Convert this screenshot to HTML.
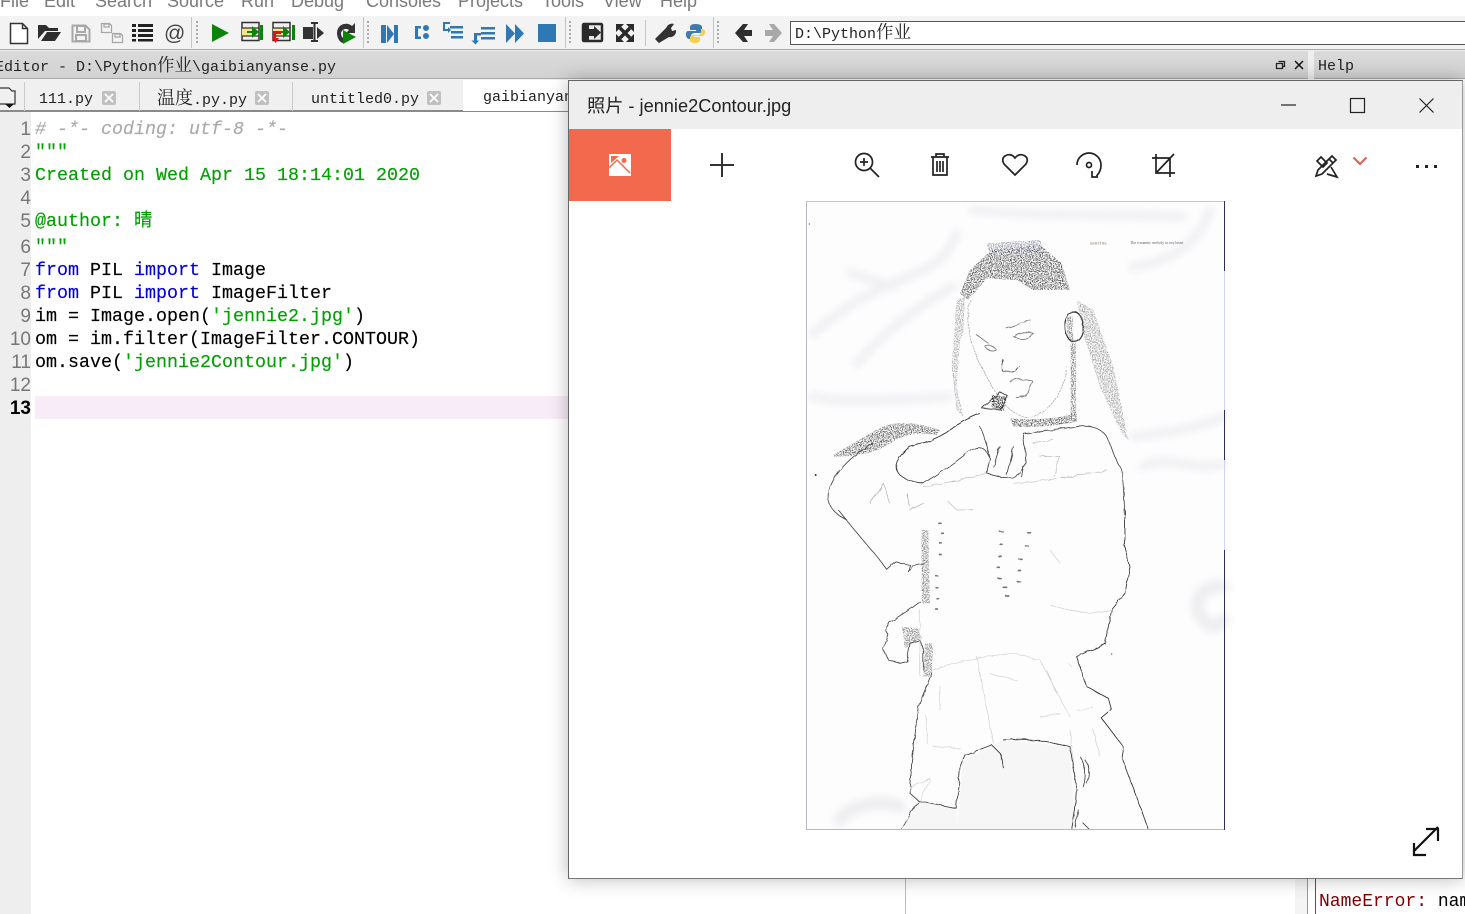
<!DOCTYPE html>
<html><head><meta charset="utf-8"><style>
html,body{margin:0;padding:0;width:1465px;height:914px;overflow:hidden;background:#fff}
.a{position:absolute;white-space:pre}
.m{font-family:"Liberation Sans",sans-serif;font-size:18px;color:#7a7a7a;top:-9px}
.t{font-family:"Liberation Mono","Noto Serif CJK SC",monospace;font-size:15px;color:#222;line-height:18px}
.t b{font-weight:normal;font-size:17.500px;font-family:"Noto Serif CJK SC",serif;line-height:18px}
.c{font-family:"Liberation Mono","Noto Sans CJK SC",monospace;font-size:18.330px;line-height:23px;left:35px;color:#000;-webkit-text-stroke:.15px}
.n{font-family:"Liberation Sans",sans-serif;font-size:19px;line-height:23px;color:#777;width:31px;left:0;text-align:right}
.k{color:#0000d8}.s{color:#00a000}
.x{width:14px;height:14px;background:#c0c0c0;top:91px;border-radius:2px}
</style></head><body>
<span class="a m" style="left:0">File</span><span class="a m" style="left:44px">Edit</span><span class="a m" style="left:95px">Search</span><span class="a m" style="left:167px">Source</span><span class="a m" style="left:241px">Run</span><span class="a m" style="left:291px">Debug</span><span class="a m" style="left:366px">Consoles</span><span class="a m" style="left:458px">Projects</span><span class="a m" style="left:542px">Tools</span><span class="a m" style="left:603px">View</span><span class="a m" style="left:660px">Help</span>

<div class="a" style="left:0;top:16px;width:1465px;height:33px;background:#f3f3f3;border-bottom:1px solid #a8a8a8"></div>
<div class="a" style="left:0;top:50px;width:1465px;height:1px;background:#eee"></div>
<div class="a" style="left:0;top:51px;width:1308px;height:27px;background:linear-gradient(#dadada,#d2d2d2);border-bottom:1px solid #aaa"></div>
<div class="a" style="left:1308px;top:51px;width:6px;height:28px;background:#eee"></div>
<div class="a" style="left:1314px;top:51px;width:151px;height:27px;background:linear-gradient(#dadada,#d2d2d2);border-bottom:1px solid #aaa"></div>
<div class="a" style="left:0;top:79px;width:568px;height:33px;background:#f0f0f0;border-bottom:2px solid #8a8a8a;box-sizing:border-box"></div>
<div class="a" style="left:463px;top:80px;width:105px;height:31px;background:#fff"></div>
<div class="a" style="left:24px;top:82px;width:1px;height:29px;background:#ccc"></div>
<div class="a" style="left:139px;top:82px;width:1px;height:29px;background:#ccc"></div>
<div class="a" style="left:292px;top:82px;width:1px;height:29px;background:#ccc"></div>
<div class="a" style="left:0;top:112px;width:31px;height:802px;background:#eeeeee"></div>
<div class="a" style="left:35px;top:396px;width:533px;height:23px;background:#f7ecf7"></div>
<div class="a" style="left:790px;top:21px;width:675px;height:22px;background:#fff;border:1px solid #555;border-right:0"></div>

<span class="a t" style="left:795px;top:23px">D:\Python<b>作业</b></span>
<span class="a t" style="left:-5px;top:56px">Editor - D:\Python<b>作业</b>\gaibianyanse.py</span>
<span class="a t" style="left:1318px;top:58px">Help</span>
<span class="a t" style="left:39px;top:91px">111.py</span>
<span class="a t" style="left:157px;top:88px"><b style="font-size:18px">温度</b>.py.py</span>
<span class="a t" style="left:311px;top:91px">untitled0.py</span>
<span class="a t" style="left:483px;top:89px">gaibianyanse.py</span>
<div class="a x" style="left:102px"></div><div class="a x" style="left:255px"></div><div class="a x" style="left:427px"></div>

<span class="a n" style="top:118px">1</span><span class="a n" style="top:141px">2</span><span class="a n" style="top:164px">3</span><span class="a n" style="top:187px">4</span><span class="a n" style="top:210px">5</span><span class="a n" style="top:236px">6</span><span class="a n" style="top:259px">7</span><span class="a n" style="top:282px">8</span><span class="a n" style="top:305px">9</span><span class="a n" style="top:328px">10</span><span class="a n" style="top:351px">11</span><span class="a n" style="top:374px">12</span><span class="a n" style="top:397px;color:#000;font-weight:bold">13</span>

<span class="a c" style="top:118px;color:#aaa;font-style:italic"># -*- coding: utf-8 -*-</span>
<span class="a c s" style="top:141px">"""</span>
<span class="a c s" style="top:164px">Created on Wed Apr 15 18:14:01 2020</span>
<span class="a c s" style="top:210px">@author: 晴</span>
<span class="a c s" style="top:236px">"""</span>
<span class="a c" style="top:259px"><span class="k">from</span> PIL <span class="k">import</span> Image</span>
<span class="a c" style="top:282px"><span class="k">from</span> PIL <span class="k">import</span> ImageFilter</span>
<span class="a c" style="top:305px">im = Image.open(<span class="s">'jennie2.jpg'</span>)</span>
<span class="a c" style="top:328px">om = im.filter(ImageFilter.CONTOUR)</span>
<span class="a c" style="top:351px">om.save(<span class="s">'jennie2Contour.jpg'</span>)</span>

<div class="a" style="left:905px;top:870px;width:1px;height:44px;background:#bbb"></div>
<div class="a" style="left:1295px;top:870px;width:12px;height:44px;background:#f4f4f4"></div>
<div class="a" style="left:1307px;top:870px;width:1px;height:44px;background:#999"></div>
<div class="a" style="left:1315px;top:870px;width:1px;height:44px;background:#555"></div>
<span class="a" style="left:1319px;top:892px;font:18px/21px 'Liberation Mono',monospace;color:#7f0000">NameError: <span style="color:#000">name</span></span>

<svg class="a" style="left:0;top:0" width="1465" height="114" viewBox="0 0 1465 114">
<path d="M10.500 23.500h12l5 5v15h-17z M22.500 23.500v5h5" fill="#fff" stroke="#333" stroke-width="1.500"/>
<path d="M38 39V25h8l3 3h9v3H45l-7 8zM41 41l6-9h14l-6 9z" fill="#2e2e2e"/>
<path d="M72.500 25.500h13l4 4v12h-17zM77 26h8v6h-8zM76 35h10v6H76z" fill="none" stroke="#a8a8a8" stroke-width="2"/>
<path d="M101.500 23.500h8l2 2v7h-10zM104 24h5v3h-5zM112.500 33.500h8l2 2v7h-10zM115 34h5v3h-5z" fill="none" stroke="#a8a8a8" stroke-width="1.300"/>
<path d="M132 24h4v3h-4zM138 24h15v3h-15zM132 29h4v3h-4zM138 29h15v3h-15zM132 34h4v3h-4zM138 34h15v3h-15zM132 39h4v2.500h-4zM138 39h15v2.500h-15z" fill="#222"/>
<text x="164" y="40" font-family="Liberation Sans" font-size="21" fill="#444">@</text>
<path d="M191.500 17v31M363.500 17v31M565.500 17v31M645.500 20v26M713.500 17v31" stroke="#c4c4c4"/>
<path d="M197 21v24M368 21v24M570 21v24M718 21v24" stroke="#aaa" stroke-dasharray="2 2" stroke-width="2"/>
<path d="M212 24l17 9-17 9z" fill="#0a850a"/>
<rect x="242" y="22.500" width="17" height="18" fill="#f0f0f0" stroke="#333" stroke-width="1.500"/><rect x="242" y="28" width="11" height="8" fill="#f4e58a"/><path d="M242 28h17M242 36h17" stroke="#333" stroke-width="1.300"/><path d="M252 26l7 6-7 6zM247 31h6v2h-6zM260 25h3v15h-3z" fill="#0a850a"/>
<rect x="273" y="22.500" width="17" height="18" fill="#f0f0f0" stroke="#333" stroke-width="1.500"/><rect x="273" y="28" width="11" height="8" fill="#f4e58a"/><path d="M273 28h17M273 36h17" stroke="#333" stroke-width="1.300"/><path d="M283 26l7 6-7 6zM278 31h6v2h-6zM292 25h3v15h-3z" fill="#0a850a"/><path d="M273 31h8v3h-5v5h-3zM272 38h7l-3.500 5z" fill="#e81010"/>
<path d="M303 27h10v12h-10zM317 27l7 6-7 6zM311 22h7v2h-2.500v16h2.500v2h-7v-2h2.500V24h-2.500z" fill="#333"/>
<path d="M337 33a9 9 0 0 1 15-7l3-3v10h-9l3-3a5 5 0 0 0-8 3c0 3 1 4 2 5v5c-4-1-6-6-6-10z" fill="#333"/><path d="M343 30l13 7-13 7z" fill="#0a850a"/>
<path d="M381 25h5v18h-5zM387 25l7 9-7 9zM394 25h4v18h-4z" fill="#2f78b4"/>
<path d="M415 26h6v2.500h-3v8h3v2.500h-6zM426 25a3 3 0 1 1 0 6 3 3 0 0 1 0-6zM426 33a3 3 0 1 1 0 6 3 3 0 0 1 0-6z" fill="#2f78b4"/>
<path d="M443 22h7v2h-5v5h3v-2l3 3-3 3v-2h-5zM450 26h13v2.500h-13zM451 31h12v2.500h-12zM451 36h12v2.500h-12z" fill="#2f78b4"/>
<path d="M474 33h7v2.500h-4v5h2l-3.500 4-4-4h2.500zM481 27h14v2.500h-14zM481 32h14v2.500h-14zM481 37h14v2.500h-14z" fill="#2f78b4"/>
<path d="M506 24l9 9.500-9 9.500zM515 24l9 9.500-9 9.500z" fill="#2f78b4"/>
<rect x="538" y="24" width="18" height="18" fill="#2f78b4"/>
<rect x="583" y="24" width="19" height="17" rx="1" fill="#e8e8e8" stroke="#2a2a2a" stroke-width="2.500"/><path d="M583 24h6v17h-6zM589 29h5v-3l7 6.500-7 6.500v-3h-5z" fill="#2a2a2a"/>
<path d="M620 28l10 10M630 28l-10 10" stroke="#2a2a2a" stroke-width="3.500"/><path d="M616 24h8l-8 8zM634 24h-8l8 8zM616 42h8l-8-8zM634 42h-8l8-8z" fill="#2a2a2a"/>
<path d="M656 40l10-10a6 6 0 0 1 8-6l-3 4 1 3 4-1a6 6 0 0 1-7 7l-10 6z" fill="#333"/><path d="M655 39l4 4 12-12-4-4z" fill="#333"/>
<path d="M695 24c-4 0-5 2-5 3v3h6v1h-8c-2 0-2 3-2 4s1 4 3 4h2v-3c0-2 2-3 4-3h4c2 0 3-1 3-3v-3c0-2-3-3-7-3z" fill="#3f7bad"/><path d="M695 43c4 0 5-2 5-3v-3h-6v-1h8c2 0 3-2 3-4s-1-3-3-3h-1v3c0 2-2 3-4 3h-4c-2 0-3 1-3 3v2c0 2 2 3 5 3z" fill="#f5cf4a"/>
<path d="M735 33l8-9h5l-4 6h8v6h-8l4 6h-5z" fill="#2e2e2e"/>
<path d="M782 33l-8-9h-5l4 6h-8v6h8l-4 6h5z" fill="#a8a8a8"/>
<path d="M1276.500 63.500h6v5h-6zM1278.500 61.500h6v5h-2" fill="none" stroke="#222" stroke-width="1.300"/>
<path d="M1295 61l8 8M1303 61l-8 8" stroke="#111" stroke-width="1.500"/>
<path d="M0 88h9l3 3h3v13H0" fill="none" stroke="#333" stroke-width="1.200"/><path d="M5 104h9l-4.500 4z" fill="#111"/>
<path d="M105 94l8 8M113 94l-8 8M258 94l8 8M266 94l-8 8M430 94l8 8M438 94l-8 8" stroke="#fff" stroke-width="1.800"/>
</svg>

<div class="a" style="left:568px;top:80px;width:895px;height:799px;background:#fff;border:1px solid #666;border-right-color:#999;border-bottom-color:#777;box-sizing:border-box;box-shadow:0 0 18px rgba(0,0,0,.28)"></div>
<div class="a" style="left:569px;top:81px;width:893px;height:48px;background:#eeeeee"></div>
<div class="a" style="left:569px;top:129px;width:102px;height:72px;background:#f2694e"></div>
<span class="a" style="left:587px;top:95px;font:18.200px/22px 'Liberation Sans','Noto Sans CJK SC',sans-serif;color:#222">照片 - jennie2Contour.jpg</span>

<svg class="a" style="left:0;top:0" width="1465" height="914" viewBox="0 0 1465 914">
<defs>
<filter id="b" filterUnits="userSpaceOnUse" x="-50" y="-50" width="1400" height="1100"><feGaussianBlur stdDeviation="11"/></filter>
<filter id="gr" filterUnits="userSpaceOnUse" x="0" y="0" width="1290" height="1000"><feTurbulence type="fractalNoise" baseFrequency=".3" numOctaves="2" seed="4"/><feColorMatrix values="0 0 0 0 0 0 0 0 0 0 0 0 0 0 0 6 0 0 0 -2.700"/><feComposite in="SourceGraphic" operator="in"/></filter>
<filter id="wb" filterUnits="userSpaceOnUse" x="0" y="0" width="1290" height="1000"><feTurbulence type="fractalNoise" baseFrequency=".035" numOctaves="2" seed="7"/><feDisplacementMap in="SourceGraphic" scale="10"/></filter>
</defs>
<path d="M1281 105h15" stroke="#222" stroke-width="1.200"/>
<rect x="1350.500" y="98.500" width="14" height="14" fill="none" stroke="#222" stroke-width="1.200"/>
<path d="M1419.500 98.500l14 14M1433.500 98.500l-14 14" stroke="#222" stroke-width="1.200"/>
<path d="M609 154h22v22h-22z" fill="#fff"/><path d="M609 168l8-8 13 13" fill="none" stroke="#f2694e" stroke-width="1.500"/><circle cx="624" cy="160.500" r="2.500" fill="#f2694e"/><path d="M611 156h8l-8 7z" fill="#f2694e"/>
<path d="M710 165h24M722 153v24" stroke="#333" stroke-width="2"/>
<g fill="none" stroke="#222" stroke-width="1.700"><circle cx="864" cy="162" r="8.500"/><path d="M870 168l9 9M860 162h8M864 158v8"/>
<path d="M931 157h18M936 157v-3h8v3M933 157v18h14v-18M937 161v11M940 161v11M943 161v11"/>
<path d="M1015 175l-10-10c-3-3-3-7 0-9 3-2 7-2 10 2 3-4 7-4 10-2 3 2 3 6 0 9z"/>
<path d="M1077 165a12 12 0 0 1 24 0c0 4-1.500 8-4.500 11"/><circle cx="1089" cy="165" r="2.500"/><path d="M1092 171v6h6"/>
<path d="M1152 158h18v19M1156 154v19h19M1156 173l18-19"/>
<path d="M1316 176l2-6 14-14 4 4-14 14zM1329 159l4 4"/><path d="M1321 157l-4 4 6 6 4-4zM1331 167l6 10-10-3"/>
<path d="M1353.500 157.500l6.500 6.500 6.500-6.500" stroke="#d9695a" stroke-width="2.200"/>
<path d="M1414 851l24-24" stroke="#111" stroke-width="2.200"/><path d="M1426 829h12v12M1414 843v12h12" stroke="#111" stroke-width="2.200"/></g>
<path d="M1416 165h3v3h-3zM1425 165h3v3h-3zM1434 165h3v3h-3z" fill="#222"/>

<rect x="806.500" y="201.500" width="418" height="628" fill="#fdfdfe"/>
<g transform="translate(800,200) scale(.3333)" fill="none" stroke-linejoin="round" stroke-linecap="round">
<g filter="url(#b)" stroke="#eeeef1" stroke-width="26" opacity=".9">
<path d="M40 400C120 330 200 280 300 240S430 190 470 100"/><path d="M170 490C250 400 350 320 460 260"/><path d="M40 590C120 610 300 600 450 590"/><path d="M1000 710C1100 700 1200 680 1270 650"/><path d="M1030 800C1100 760 1200 820 1270 790"/><path d="M1000 200C1100 190 1200 130 1230 30"/><path d="M150 220L280 260M520 30C700 50 900 40 1150 50"/></g>
<g filter="url(#gr)">
<path d="M575 150L720 135 785 190 810 270 700 270 650 240 560 235 505 300 480 280 510 210z" fill="#333" opacity=".8"/>
<path d="M100 765Q160 730 230 690T420 690L410 705Q330 690 270 730T100 770z" fill="#333" opacity=".75"/>
<path d="M630 655Q730 665 830 640L830 665Q730 685 640 680z" fill="#333" opacity=".8"/>
<path d="M830 300L880 330 940 500 985 720 965 700 900 560 850 400z" fill="#555" opacity=".5"/>
<path d="M470 300L495 290 490 400 480 420 470 560 490 650 470 630 455 500z" fill="#777" opacity=".6"/>
<path d="M575 585L620 590 610 635 575 620z" fill="#222"/>
<path d="M800 350l18 0 2 80 -18 -10zM812 430h16V650h-16z" fill="#444" opacity=".7"/>
<path d="M560 130l160-10 10 30-160 15z" fill="#557" opacity=".6"/>
</g>
<g filter="url(#wb)" stroke="#4a4a4a" stroke-width="2.600">
<path d="M510 300C490 380 520 460 560 530 590 590 640 660 690 650S790 590 800 500" stroke="#999" stroke-width="2" stroke-dasharray="5 4"/>
<ellipse cx="822" cy="380" rx="28" ry="44" stroke="#333" stroke-width="3.500"/>
<path d="M620 385l70-25M640 410q25-20 60-10-25 25-60 10zM530 405l35 25M555 440q20-10 35 10-20 10-35-10z" stroke="#777"/>
<path d="M610 480q-10 25 0 35l25 0 25-15" stroke="#444"/>
<path d="M630 545q30-15 70 0-15 45-50 50" stroke="#777"/>
<path d="M545 625l55-50 25 15-25 40-55-5z" stroke="#333"/>
<path d="M540 640Q490 660 450 690T330 740Q280 780 290 810T370 850" stroke="#333"/>
<path d="M370 850Q450 800 500 760T570 775L560 820Q620 840 650 830L680 790 670 700M540 680Q560 730 570 770M600 740l-20 60M640 740l-20 85M670 800l-5 30" stroke="#444"/>
<path d="M220 730Q130 780 95 850T140 960"/>
<path d="M670 700Q750 690 830 680T930 730 960 800 975 960"/>
<path d="M700 730l60-10M720 770h60l-20 60M440 900l30 30H520M560 820q-120 30-190 40M640 850q130-10 280-40" stroke="#bbb" stroke-width="2"/>
<path d="M210 910l40-60 20 60M320 880l10 40M330 930l40-20" stroke="#aaa" stroke-width="2"/>
</g>
<circle cx="47" cy="825" r="3" fill="#333"/><circle cx="28" cy="72" r="2" fill="#555"/>
<text x="870" y="133" font-family="Liberation Serif" font-size="17" fill="#9a8f7a">sanctus</text>
<text x="990" y="132" font-family="Liberation Serif" font-size="12" fill="#666">The romantic melody in my heart</text>
</g>
<g transform="translate(800,510) scale(.3333)" fill="none" stroke-linejoin="round" stroke-linecap="round">
<path d="M490 750L610 690 810 710 825 958H470zM350 875L470 895V958H310z" fill="#f6f6f6"/>
<g filter="url(#b)" stroke="#eeeef0"><path d="M1270 230C1200 220 1170 290 1210 330S1250 340 1270 330" stroke-width="40"/><path d="M120 930C150 880 250 870 300 890" stroke-width="40"/></g>
<g filter="url(#gr)"><path d="M305 350l50 5 10 30-50 30zM365 60h20l5 220h-25zM375 400h25l-5 100h-25z" fill="#555" opacity=".7"/></g>
<g filter="url(#wb)" stroke="#444" stroke-width="2.600">
<path d="M115 0Q170 70 240 150L260 178 285 155 330 165 325 185 340 165 370 160"/>
<path d="M360 275Q330 300 270 335L255 360 265 375 250 420 265 450 300 460 320 455 330 400 360 390 370 420 370 480"/>
<path d="M395 490L355 590 335 760 330 850 355 872 470 895"/><path d="M355 872L305 958"/>
<path d="M975 0V120L990 170 975 250 935 300 915 400 830 440 860 530 925 565 935 600 905 625 970 710 965 740 1010 860 1045 958" stroke="#333"/>
<path d="M470 895L480 770 495 735 575 705 600 730 612 775M610 690Q700 680 810 710L830 830 825 900 815 958" stroke="#333"/>
<path d="M840 740q25 40 10 90M855 750q20 30 5 70M835 900l-10 50M850 940l15 15"/>
<g stroke="#777" stroke-width="5"><path d="M600 65h10M685 70h8M600 103h6M675 107h8M597 140h8M658 148h8M592 172h6M652 180h8M597 207h8M652 215h8M610 232h10M618 258h8M415 40h8M425 70h5M420 100h5M420 135h5M410 200h5M410 235h5M410 265h5M410 300h5"/></g>
<path d="M530 440L580 700M400 480Q520 440 640 430L720 450 810 620M740 480l30 70M880 660l20 80M810 660l10 90M400 710l80 5M335 830l55-25M360 870l30-60M805 460l10 10M570 490l80 20M720 620l60-10M830 600l50-5M750 120l30 40M750 285Q850 320 930 300M360 300V500M420 530V600M380 620V700" stroke="#d0d0d0" stroke-width="2"/>
</g>
<circle cx="935" cy="432" r="2" fill="#444"/>
</g>
<path d="M806.500 201v629M806 829.500h419" stroke="#b8b8c4" fill="none"/><path d="M806 201.500h419" stroke="#c0c4dc"/>
<path d="M1224.500 201v70M1224.500 410v50M1224.500 550v280" stroke="#2a2f55"/><path d="M1224.500 271v139M1224.500 460v90" stroke="#d0d4f0"/>
</svg>
</body></html>
